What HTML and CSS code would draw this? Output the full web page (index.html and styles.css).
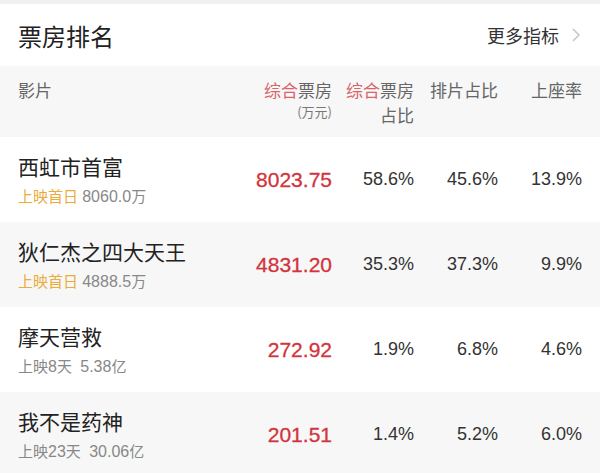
FILE: index.html
```html
<!DOCTYPE html>
<html lang="zh">
<head>
<meta charset="utf-8">
<link rel="stylesheet" href="styles.css">
</head>
<body>
<div class="strip"></div>
<header class="head">
  <h1 class="title">票房排名</h1>
  <a class="more">更多指标
    <svg class="chev" width="10" height="16" viewBox="0 0 10 16"><path d="M2 2 L8 8 L2 14" fill="none" stroke="#c8c8c8" stroke-width="1.6"/></svg>
  </a>
</header>
<div class="table">
  <div class="row thead">
    <div class="cell name">影片</div>
    <div class="cell num"><div><span class="hl">综合</span>票房</div><div class="unit">(万元)</div></div>
    <div class="cell num"><div><span class="hl">综合</span>票房</div><div>占比</div></div>
    <div class="cell num">排片占比</div>
    <div class="cell num">上座率</div>
  </div>
  <div class="row">
    <div class="cell name"><div class="film">西虹市首富</div><div class="sub"><span class="gold">上映首日</span> <span class="v">8060.0</span>万</div></div>
    <div class="cell num red">8023.75</div>
    <div class="cell num">58.6%</div>
    <div class="cell num">45.6%</div>
    <div class="cell num">13.9%</div>
  </div>
  <div class="row alt">
    <div class="cell name"><div class="film">狄仁杰之四大天王</div><div class="sub"><span class="gold">上映首日</span> <span class="v">4888.5</span>万</div></div>
    <div class="cell num red">4831.20</div>
    <div class="cell num">35.3%</div>
    <div class="cell num">37.3%</div>
    <div class="cell num">9.9%</div>
  </div>
  <div class="row">
    <div class="cell name"><div class="film">摩天营救</div><div class="sub">上映<span class="v">8</span>天&nbsp; <span class="v">5.38</span>亿</div></div>
    <div class="cell num red">272.92</div>
    <div class="cell num">1.9%</div>
    <div class="cell num">6.8%</div>
    <div class="cell num">4.6%</div>
  </div>
  <div class="row alt">
    <div class="cell name"><div class="film">我不是药神</div><div class="sub">上映<span class="v">23</span>天&nbsp; <span class="v">30.06</span>亿</div></div>
    <div class="cell num red">201.51</div>
    <div class="cell num">1.4%</div>
    <div class="cell num">5.2%</div>
    <div class="cell num">6.0%</div>
  </div>
</div>
</body>
</html>
```
FILE: styles.css
```css
* { box-sizing: border-box; }
html, body { margin: 0; padding: 0; background: #f7f7f7; }
body {
  width: 600px;
  height: 473px;
  overflow: hidden;
  font-family: "Liberation Sans", "Noto Sans CJK SC", sans-serif;
  color: #333;
}
.strip { height: 4px; background: #f0f0f0; }
.head {
  height: 62px;
  background: #fff;
  display: flex;
  align-items: center;
  justify-content: space-between;
  padding: 0 18px;
}
.title {
  margin: 0;
  font-size: 24px;
  font-weight: normal;
  color: #222;
  font-family: "Noto Sans CJK SC", sans-serif;
}
.more {
  display: flex;
  align-items: center;
  gap: 12px;
  font-size: 18px;
  color: #333;
  font-family: "Noto Sans CJK SC", sans-serif;
}
.chev { display: block; margin-right: 1px; }
.row {
  display: grid;
  grid-template-columns: 1fr 100px 82px 84px 84px;
  align-items: center;
  padding: 0 18px;
  height: 85px;
  background: #fff;
}
.row.alt { background: #f7f7f7; }
.thead {
  height: 71px;
  background: #f7f7f7;
  align-items: start;
  padding-top: 11px;
  font-size: 17px;
  line-height: 25px;
  color: #666;
  font-family: "Noto Sans CJK SC", sans-serif;
}
.hl { color: #d9646a; }
.unit { font-size: 13px; line-height: 19px; color: #777; }
.cell.num { text-align: right; font-size: 18px; }
.thead .cell.num { font-size: 17px; }
.red { color: #d2343c; font-size: 21px !important; -webkit-text-stroke: 0.3px #d2343c; }
.film {
  font-family: "Noto Sans CJK SC", sans-serif;
  font-size: 21px;
  line-height: 26px;
  color: #222;
}
.sub {
  margin-top: 8px;
  font-size: 15px;
  line-height: 20px;
  color: #888;
}
.v { font-size: 16px; }
.gold { color: #ebac3c; }
```
